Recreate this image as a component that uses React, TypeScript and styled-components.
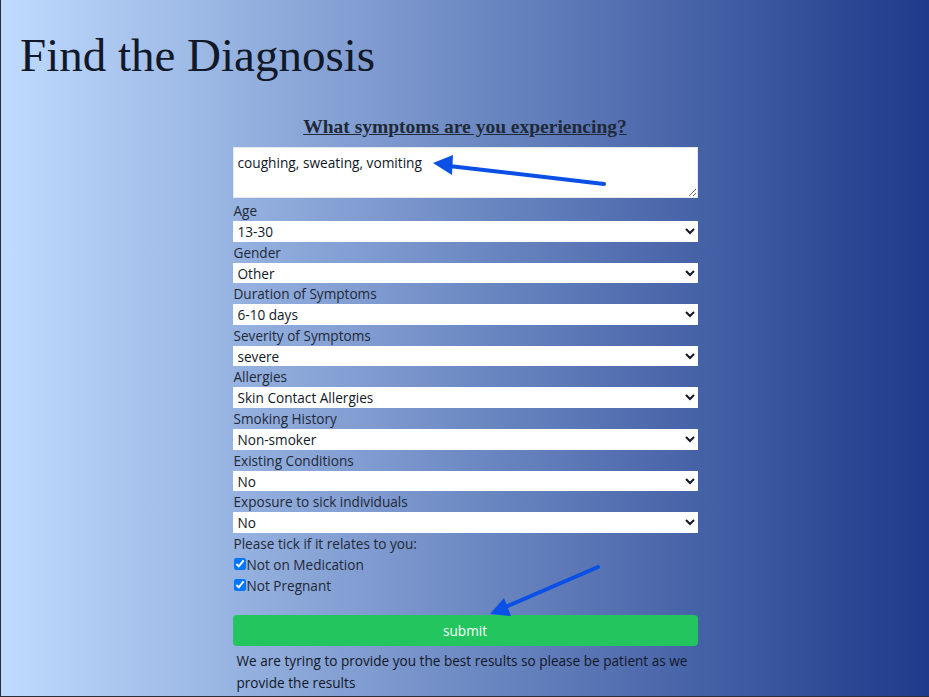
import React from "react";
import styled, { createGlobalStyle } from "styled-components";

const GlobalStyle = createGlobalStyle`
  html, body {
    margin: 0;
    padding: 0;
    overflow: hidden;
  }
  body {
    font-family: "Open Sans", "Noto Sans", sans-serif;
  }
`;

const Frame = styled.div`
  position: relative;
  box-sizing: border-box;
  width: 929px;
  height: 697px;
  overflow: hidden;
  border-left: 1px solid #2b2f36;
  border-bottom: 1px solid #2b2f36;
  background: linear-gradient(to right, #bfdbfe 0%, #1e3a8a 100%);
`;

const Page = styled.div`
  display: flex;
  flex-direction: column;
  padding: 0 19px;
`;

const Title = styled.h1`
  margin: 29px 0 0 0;
  font-family: "Liberation Serif", "Times New Roman", serif;
  font-weight: 400;
  font-size: 47px;
  line-height: 53px;
  color: #111827;
`;

const Form = styled.form`
  align-self: center;
  width: 465px;
  margin-top: 35px;
  display: flex;
  flex-direction: column;
`;

const Question = styled.h2`
  margin: 0 0 10px 0;
  text-align: center;
  font-family: "Liberation Serif", "Times New Roman", serif;
  font-weight: 700;
  font-size: 19.5px;
  line-height: 20px;
  color: #1f2937;
  text-decoration: underline;
`;

const Symptoms = styled.textarea`
  display: block;
  box-sizing: border-box;
  width: 100%;
  height: 51px;
  margin: 0 0 2px 0;
  padding: 6px 4px;
  border: 1px solid #e5e7eb;
  background: #ffffff;
  font-family: "Open Sans", "Noto Sans", sans-serif;
  font-size: 13.7px;
  line-height: 18px;
  color: #111827;
  resize: vertical;
`;

const FieldLabel = styled.label`
  display: block;
  font-size: 13.6px;
  line-height: 21px;
  color: #1f2937;
  padding-left: 1px;
`;

const Select = styled.select`
  display: block;
  box-sizing: border-box;
  width: 100%;
  height: 20.6px;
  margin: 0;
  padding: 0 0 0 1px;
  border: none;
  border-radius: 0;
  background-color: #ffffff;
  font-family: "Open Sans", "Noto Sans", sans-serif;
  font-size: 13.6px;
  color: #111827;
`;

const CheckRow = styled.label`
  display: flex;
  align-items: center;
  font-size: 13.6px;
  line-height: 21px;
  color: #1f2937;
`;

const Check = styled.input`
  width: 12px;
  height: 12px;
  margin: 0 1px 0 1px;
`;

const Submit = styled.button`
  box-sizing: border-box;
  width: 100%;
  height: 31px;
  margin-top: 19px;
  padding-top: 1px;
  border: none;
  border-radius: 4px;
  background: #22c55e;
  color: #ffffff;
  font-family: "Open Sans", "Noto Sans", sans-serif;
  font-size: 13.6px;
`;

const Note = styled.p`
  margin: 4px 0 0 0;
  padding: 0 4px;
  font-size: 13.6px;
  line-height: 22px;
  color: #111827;
`;

const Annotations = styled.svg`
  position: absolute;
  left: 0;
  top: 0;
  width: 929px;
  height: 697px;
  pointer-events: none;
`;

const fields: { label: string; value: string }[] = [
  { label: "Age", value: "13-30" },
  { label: "Gender", value: "Other" },
  { label: "Duration of Symptoms", value: "6-10 days" },
  { label: "Severity of Symptoms", value: "severe" },
  { label: "Allergies", value: "Skin Contact Allergies" },
  { label: "Smoking History", value: "Non-smoker" },
  { label: "Existing Conditions", value: "No" },
  { label: "Exposure to sick individuals", value: "No" },
];

export default function App() {
  return (
    <>
      <GlobalStyle />
      <Frame>
        <Page>
          <Title>Find the Diagnosis</Title>
          <Form onSubmit={(e) => e.preventDefault()}>
            <Question>What symptoms are you experiencing?</Question>
            <Symptoms defaultValue="coughing, sweating, vomiting" />
            {fields.map((f) => (
              <React.Fragment key={f.label}>
                <FieldLabel>{f.label}</FieldLabel>
                <Select defaultValue={f.value}>
                  <option value={f.value}>{f.value}</option>
                </Select>
              </React.Fragment>
            ))}
            <FieldLabel>Please tick if it relates to you:</FieldLabel>
            <CheckRow>
              <Check type="checkbox" defaultChecked />
              Not on Medication
            </CheckRow>
            <CheckRow>
              <Check type="checkbox" defaultChecked />
              Not Pregnant
            </CheckRow>
            <Submit type="submit">submit</Submit>
            <Note>
              We are tyring to provide you the best results so please be patient as we provide the results
            </Note>
          </Form>
        </Page>
        <Annotations viewBox="0 0 929 697">
          <line x1="603" y1="184" x2="448" y2="166" stroke="#0a4fe6" strokeWidth="4" strokeLinecap="round" />
          <polygon points="432,163 452,155 451,175" fill="#0a4fe6" />
          <line x1="597" y1="567" x2="502" y2="608" stroke="#0a4fe6" strokeWidth="4" strokeLinecap="round" />
          <polygon points="489,614 503,598 510,616" fill="#0a4fe6" />
        </Annotations>
      </Frame>
    </>
  );
}
